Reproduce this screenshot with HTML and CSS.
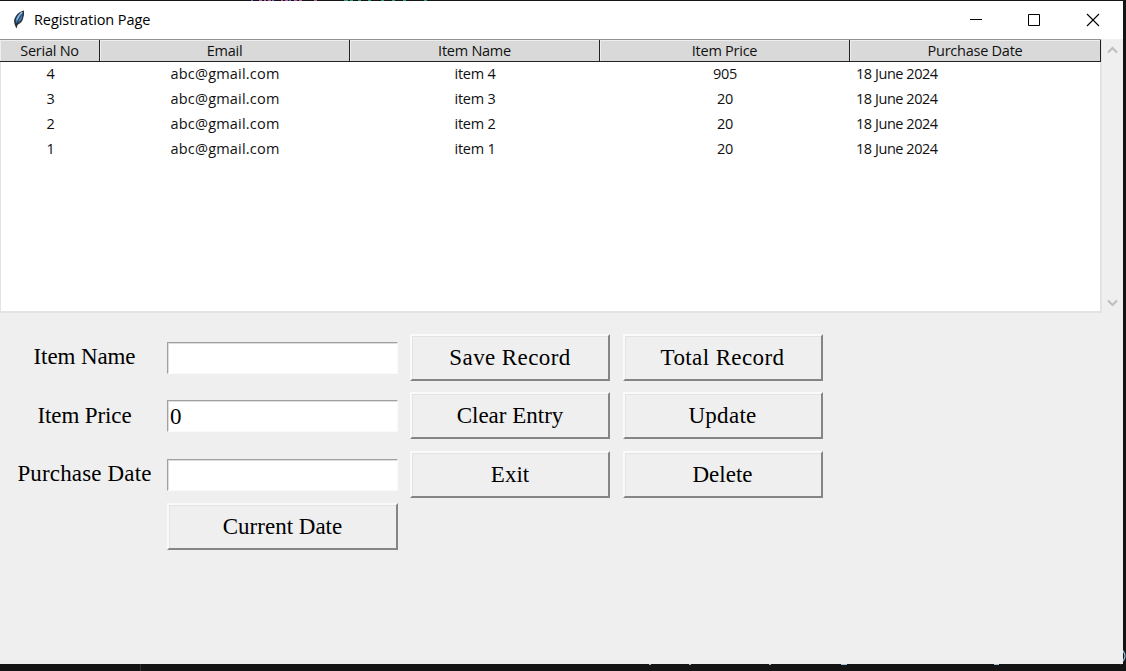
FILE: index.html
```html
<!DOCTYPE html>
<html lang="en">
<head>
<meta charset="utf-8">
<title>Registration Page</title>
<link rel="stylesheet" href="styles.css">
</head>
<body>
<svg class="backdrop" width="1126" height="671" viewBox="0 0 1126 671" shape-rendering="crispEdges">
  <path d="M251 .5h2M272 .5h2M289 .5h2" stroke="#7568c8"/>
  <path d="M259 .5h3M264 .5h2M268 .5h3M281 .5h2M285 .5h3M294 .5h3M299 .5h3M314 .5h3" stroke="#b65fa0"/>
  <path d="M344 .5h4M350 .5h3M358 .5h3M368 .5h3M381 .5h3M392 .5h3M403 .5h3M424 .5h3" stroke="#289b82"/>
  <path d="M649 664.5h2M689 664.5h2M769 664.5h2M841 664.5h6M994 664.5h5" stroke="#a9c3d4"/>
  <path d="M140.500 664v7" stroke="#303030"/>
  <path d="M1120 648q10 8 0 16" fill="none" stroke="#8fb9df" stroke-width="1.300" shape-rendering="auto"/>
</svg>
<main class="window">
  <header class="titlebar">
    <svg class="feather" width="14" height="22" viewBox="0 0 14 22">
      <path d="M12 1.500C7 2.500 3.500 6 2 11.500L2.500 15l1.800 4.500 1-3.500C9 14 10.800 12 11.200 9l.8-3z" fill="#28333f"/>
      <path d="M11 2.500C7.700 4.200 4.500 7.500 3.500 12L5 14.500c3-2 4.800-4 5-6z" fill="#437eb6"/>
      <path d="M10 3C8 5 6 7.500 5 11" fill="none" stroke="#8bb9df" stroke-width="1.500"/>
      <path d="M10 5.500C7 9 5 12.500 4.500 18.500" fill="none" stroke="#182431" stroke-width=".8"/>
    </svg>
    <h1 class="title">Registration Page</h1>
    <div class="controls">
      <svg class="control" viewBox="0 0 58 38"><path d="M20 18.500h12" stroke="#000"/></svg>
      <svg class="control" viewBox="0 0 58 38"><path d="M20.500 13.500h11v11h-11z" fill="none" stroke="#000"/></svg>
      <svg class="control" viewBox="0 0 58 38"><path d="M21 13l12 12M33 13l-12 12" stroke="#000" stroke-width="1.100"/></svg>
    </div>
  </header>
  <section class="records">
    <div class="table">
      <div class="row head"><span>Serial No</span><span>Email</span><span>Item Name</span><span>Item Price</span><span>Purchase Date</span></div>
      <div class="row"><span>4</span><span class="email">abc@gmail.com</span><span>item 4</span><span>905</span><span class="date">18 June 2024</span></div>
      <div class="row"><span>3</span><span class="email">abc@gmail.com</span><span>item 3</span><span>20</span><span class="date">18 June 2024</span></div>
      <div class="row"><span>2</span><span class="email">abc@gmail.com</span><span>item 2</span><span>20</span><span class="date">18 June 2024</span></div>
      <div class="row"><span>1</span><span class="email">abc@gmail.com</span><span>item 1</span><span>20</span><span class="date">18 June 2024</span></div>
    </div>
    <div class="scrollbar">
      <svg width="20" height="20" viewBox="0 0 20 20"><path d="M5 13.500l4.500-4.500 4.500 4.500" fill="none" stroke="#bfbfbf" stroke-width="2.200"/></svg>
      <svg width="20" height="20" viewBox="0 0 20 20"><path d="M5 7.500l4.500 4.500 4.500-4.500" fill="none" stroke="#bfbfbf" stroke-width="2.200"/></svg>
    </div>
  </section>
  <form class="form">
    <label class="label" for="name">Item Name</label><input class="entry" id="name"><button class="button wide" type="button">Save Record</button><button class="button wide" type="button">Total Record</button>
    <label class="label" for="price">Item Price</label><input class="entry" id="price" value="0"><button class="button" type="button">Clear Entry</button><button class="button update" type="button">Update</button>
    <label class="label purchase" for="date">Purchase Date</label><input class="entry" id="date"><button class="button" type="button">Exit</button><button class="button" type="button">Delete</button>
    <button class="button current" type="button">Current Date</button>
  </form>
</main>
</body>
</html>
```
FILE: styles.css
```css
* { box-sizing: border-box; }
body { margin: 0; width: 1126px; height: 671px; padding-top: 1px; overflow: hidden; background: #141414; font-family: "Open Sans", "Noto Sans", sans-serif; color: #000; }
.backdrop { position: absolute; left: 0; top: 0; }
.window { position: relative; width: 1123px; height: 663px; background: #efefef; }
.titlebar { height: 38px; display: flex; align-items: center; background: #fff; padding-left: 12px; }
.feather { flex: none; margin-right: 8px; margin-top: -1px; }
.title { margin: 0; font-size: 14.5px; font-weight: 400; letter-spacing: -.08px; line-height: 20px; }
.controls { display: flex; margin-left: auto; margin-right: -1px; }
.control { width: 58px; height: 38px; }
.records { display: flex; justify-content: space-between; height: 274px; }
.table { width: 1102px; background: #fff; border: 1px solid #e3e3e3; border-width: 0 2px 2px 1px; }
.row { display: grid; grid-template-columns: 99px 250px 250px 250px 250px; height: 25px; line-height: 23px; font-size: 14.5px; letter-spacing: -.25px; text-align: center; color: #111; }
.head { height: 23px; margin-left: -1px; width: 1101px; grid-template-columns: 100px 250px 250px 250px 251px; line-height: 22px; background: #d9d9d9; border-top: 1px solid #929292; border-bottom: 1px solid #222; }
.head span { height: 21px; border-right: 1px solid #222; box-shadow: inset 1px 1px #eee; }
.email { letter-spacing: .2px; }
.date { text-align: left; padding-left: 6px; letter-spacing: -.45px; }
.scrollbar { width: 20px; display: flex; flex-direction: column; justify-content: space-between; }
.form { display: grid; grid-template-columns: 134px 230px 200px 200px; grid-template-rows: repeat(4, 47px); column-gap: 12.5px; row-gap: 11.7px; padding: 20.5px 0 0 17.500px; align-items: center; font: 23px "Liberation Serif", "Times New Roman", serif; }
.label { text-align: center; white-space: nowrap; margin-left: -4px; margin-right: -4px; letter-spacing: -.1px; }
.purchase { letter-spacing: .15px; }
.entry { margin-left: 3px; margin-top: 1px; width: 231px; height: 32px; padding: 1px 2px 0; border: 1px solid; border-color: #a0a0a0 #fafafa #fafafa #a0a0a0; box-shadow: inset 1px 1px #ddd; background: #fff; font: inherit; }
.button { margin-left: 3.500px; width: 200px; height: 47px; padding: 1px 0 0; border: 2px solid; border-color: #fafafa #858585 #858585 #fafafa; box-shadow: inset 1px 1px #e3e3e3; background: #efefef; font: inherit; }
.wide { letter-spacing: .4px; }
.update { letter-spacing: .3px; }
.current { grid-column: 2; margin-left: 3px; width: 231px; margin-top: -13px; }
```
